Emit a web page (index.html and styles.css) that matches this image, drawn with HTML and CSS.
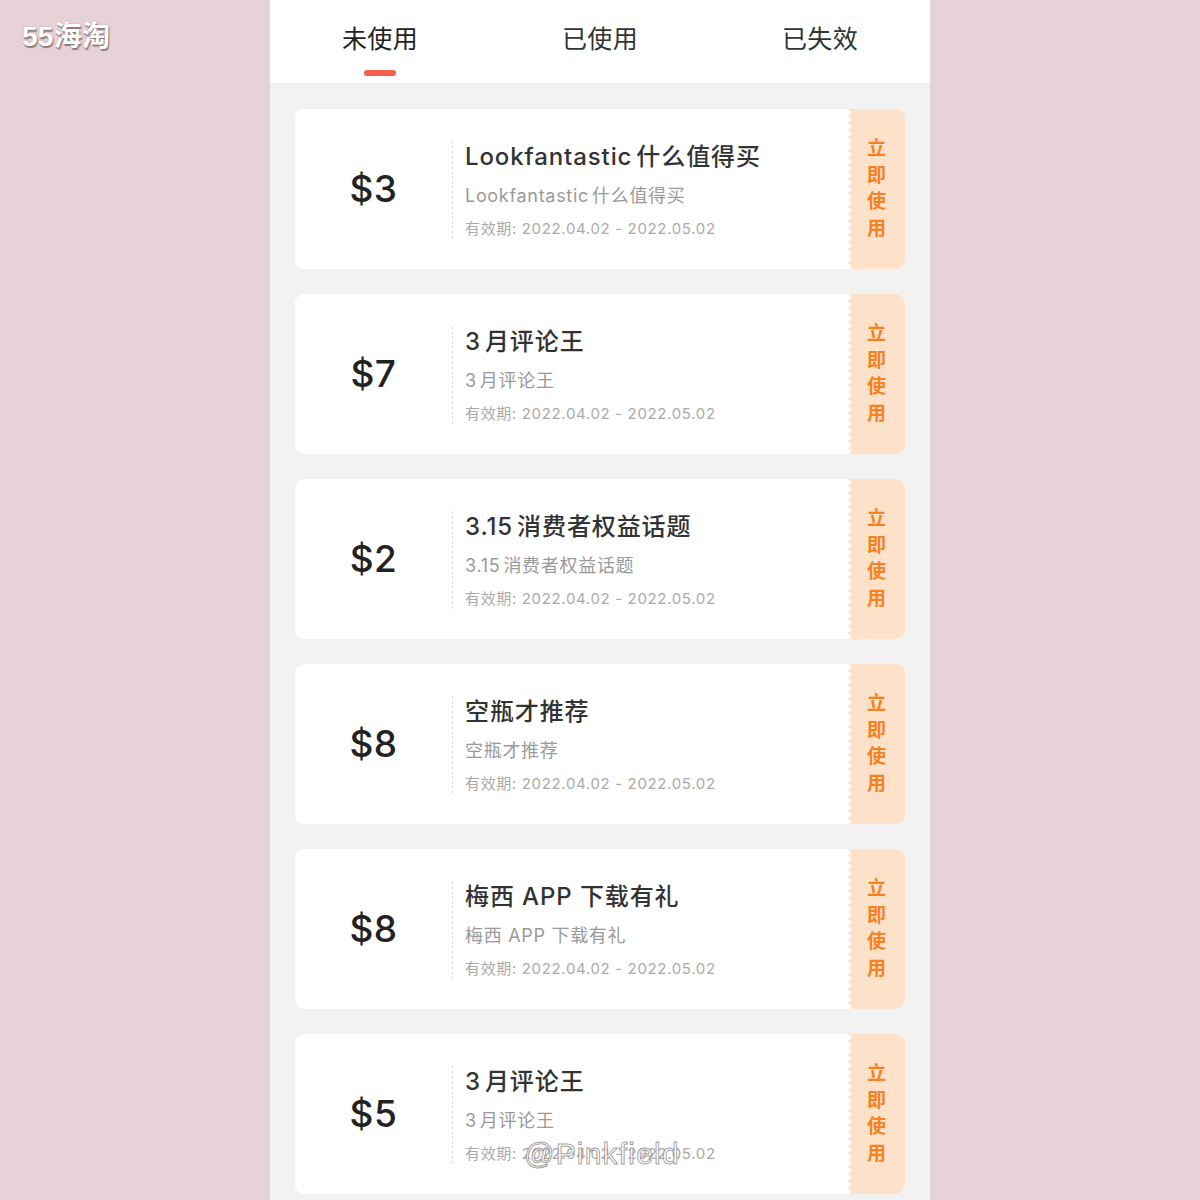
FILE: index.html
```html
<!DOCTYPE html>
<html lang="zh">
<head>
<meta charset="utf-8">
<link rel="stylesheet" href="styles.css">
</head>
<body>
<div class="logo">55海淘</div>
<div class="phone">
  <header class="tabs">
    <div class="tab active">未使用<span class="bar"></span></div>
    <div class="tab">已使用</div>
    <div class="tab">已失效</div>
  </header>
  <main class="list">
    <div class="card">
      <div class="amount">$3</div>
      <div class="info">
        <div class="title"><span class="lat">Lookfantastic</span>什么值得买</div>
        <div class="sub"><span class="lat">Lookfantastic</span>什么值得买</div>
        <div class="date">有效期: 2022.04.02 - 2022.05.02</div>
      </div>
      <div class="stub"><span>立</span><span>即</span><span>使</span><span>用</span></div>
    </div>
    <div class="card">
      <div class="amount">$7</div>
      <div class="info">
        <div class="title"><span class="lat">3</span>月评论王</div>
        <div class="sub"><span class="lat">3</span>月评论王</div>
        <div class="date">有效期: 2022.04.02 - 2022.05.02</div>
      </div>
      <div class="stub"><span>立</span><span>即</span><span>使</span><span>用</span></div>
    </div>
    <div class="card">
      <div class="amount">$2</div>
      <div class="info">
        <div class="title"><span class="lat">3.15</span>消费者权益话题</div>
        <div class="sub"><span class="lat">3.15</span>消费者权益话题</div>
        <div class="date">有效期: 2022.04.02 - 2022.05.02</div>
      </div>
      <div class="stub"><span>立</span><span>即</span><span>使</span><span>用</span></div>
    </div>
    <div class="card">
      <div class="amount">$8</div>
      <div class="info">
        <div class="title">空瓶才推荐</div>
        <div class="sub">空瓶才推荐</div>
        <div class="date">有效期: 2022.04.02 - 2022.05.02</div>
      </div>
      <div class="stub"><span>立</span><span>即</span><span>使</span><span>用</span></div>
    </div>
    <div class="card">
      <div class="amount">$8</div>
      <div class="info">
        <div class="title">梅西 APP 下载有礼</div>
        <div class="sub">梅西 APP 下载有礼</div>
        <div class="date">有效期: 2022.04.02 - 2022.05.02</div>
      </div>
      <div class="stub"><span>立</span><span>即</span><span>使</span><span>用</span></div>
    </div>
    <div class="card">
      <div class="amount">$5</div>
      <div class="info">
        <div class="title"><span class="lat">3</span>月评论王</div>
        <div class="sub"><span class="lat">3</span>月评论王</div>
        <div class="date">有效期: 2022.04.02 - 2022.05.02</div>
      </div>
      <div class="stub"><span>立</span><span>即</span><span>使</span><span>用</span></div>
    </div>
  </main>
</div>
<div class="watermark">@Pinkfield</div>
</body>
</html>
```
FILE: styles.css
```css
* { box-sizing: border-box; }
html, body { margin: 0; padding: 0; }
body {
  width: 1200px;
  height: 1200px;
  overflow: hidden;
  background: #e7d3d7;
  font-family: Inter, "Noto Sans CJK SC", sans-serif;
  position: relative;
}
.logo {
  position: absolute;
  left: 22px;
  top: 21px;
  font-family: "Liberation Sans", "Noto Sans CJK SC", sans-serif;
  font-size: 28px;
  font-weight: 700;
  line-height: 32px;
  color: #fff;
  letter-spacing: 0.3px;
  text-shadow: 1px 1.5px 1px rgba(90,70,75,0.6), 0 0 2px rgba(90,70,75,0.35);
}
.phone {
  width: 660px;
  height: 1200px;
  margin: 0 auto;
  background: #f2f2f2;
  display: flex;
  flex-direction: column;
}
.tabs {
  height: 83px;
  background: #fff;
  display: flex;
}
.tab {
  flex: 1;
  position: relative;
  text-align: center;
  font-size: 25px;
  line-height: 30px;
  padding-top: 24px;
  color: #333;
  letter-spacing: 0.3px;
}
.tab.active { color: #222; }
.tab .bar {
  position: absolute;
  left: 50%;
  top: 70px;
  width: 32px;
  height: 6px;
  margin-left: -16px;
  border-radius: 3px;
  background: #f5604a;
}
.list {
  padding: 26px 25px 0;
  display: flex;
  flex-direction: column;
  gap: 25px;
}
.card {
  height: 160px;
  flex: none;
  background: #fff;
  border-radius: 9px;
  display: flex;
  overflow: hidden;
}
.amount {
  width: 157px;
  text-align: center;
  font-size: 37px;
  font-weight: 500;
  color: #222;
  line-height: 160px;
  letter-spacing: 0.5px;
}
.info {
  flex: 1;
  margin: 32px 0 30px;
  padding-left: 12px;
  border-left: 1px dashed #dedede;
}
.lat { margin-right: 4px; }
.title {
  font-size: 24px;
  line-height: 32px;
  color: #333;
  font-weight: 500;
  white-space: nowrap;
  letter-spacing: 0.9px;
}
.sub {
  margin-top: 10px;
  font-size: 18px;
  line-height: 26px;
  color: #9a9a9a;
  white-space: nowrap;
  letter-spacing: 0.7px;
}
.sub .lat { margin-right: 3px; }
.date {
  margin-top: 10px;
  font-size: 15px;
  line-height: 20px;
  color: #aaa;
  white-space: nowrap;
  letter-spacing: 0.65px;
}
.stub {
  width: 57px;
  position: relative;
  background: #fde1c8;
  display: flex;
  flex-direction: column;
  align-items: center;
  justify-content: center;
  color: #f5821f;
  font-size: 19px;
  font-weight: 700;
  font-family: "Noto Sans CJK SC", sans-serif;
  line-height: 26.5px;
  padding-bottom: 4px;
}
.stub::before {
  content: "";
  position: absolute;
  left: 0;
  top: 0;
  bottom: 0;
  width: 4px;
  background: radial-gradient(circle at 0 50%, #fff 2.6px, transparent 3.2px) 0 0 / 4px 7px repeat-y;
}
.watermark {
  position: absolute;
  left: 524px;
  top: 1136px;
  font-family: "Liberation Sans", sans-serif;
  font-size: 30px;
  line-height: 36px;
  letter-spacing: 1.2px;
  color: rgba(255,255,255,0.85);
  -webkit-text-stroke: 1px rgba(120,120,120,0.7);
}
```
